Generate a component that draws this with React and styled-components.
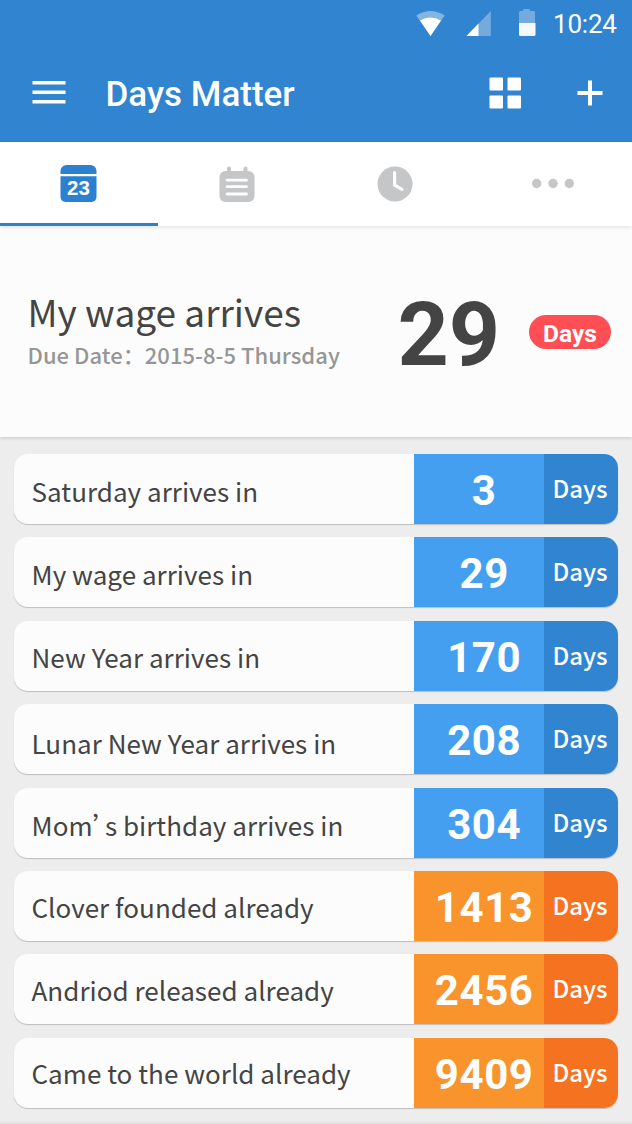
import React from 'react';
import styled, { createGlobalStyle } from 'styled-components';

const GlobalStyle = createGlobalStyle`
    * {
        box-sizing: border-box;
    }
    body {
        margin: 0;
        background: #ededed;
        font-family: 'Noto Sans CJK SC', 'Noto Sans', sans-serif;
        color: #444;
    }
`;

const Screen = styled.div`
    width: 632px;
    height: 1124px;
    overflow: hidden;
    display: flex;
    flex-direction: column;
    background: linear-gradient(#ededed 1120px, #e0e0e0 1124px);
`;

const Header = styled.header`
    height: 142px;
    flex: none;
    background: #3084d0;
    color: #fff;
    font-family: Roboto, sans-serif;
`;

const StatusBar = styled.div`
    height: 48px;
    padding: 0 15px 0 0;
    display: flex;
    justify-content: flex-end;
    svg {
        display: block;
    }
`;

const Clock = styled.span`
    width: 64px;
    margin-left: 17px;
    font-size: 26px;
    line-height: 48px;
    letter-spacing: -0.2px;
    white-space: nowrap;
`;

const AppBar = styled.div`
    height: 92px;
    padding: 0 29px 2px 32px;
    display: flex;
    align-items: center;
`;

const AppTitle = styled.h1`
    flex: 1;
    margin: 0 0 0 39.5px;
    font-size: 35px;
    font-weight: 500;
    line-height: 92px;
    padding-top: 3px;
`;

const IconButton = styled.button`
    padding: 0;
    margin: 0 0 0 ${({ $gap }) => $gap || 0}px;
    border: 0;
    background: none;
    svg {
        display: block;
    }
`;

const Tabs = styled.nav`
    height: 84px;
    flex: none;
    display: grid;
    grid-template-columns: repeat(4, 1fr);
    background: #fff;
    box-shadow: 0 1px 5px rgba(0, 0, 0, 0.12);
    z-index: 1;
`;

const Tab = styled.div`
    display: flex;
    justify-content: center;
    padding-top: 22px;
    border-bottom: 3px solid ${({ $active }) => ($active ? '#2b80d0' : 'transparent')};
    svg {
        display: block;
    }
`;

const Hero = styled.section`
    height: 211px;
    flex: none;
    display: flex;
    padding: 58px 21px 0 27.5px;
    background: #fcfcfc;
    box-shadow: 0 1px 4px rgba(0, 0, 0, 0.16);
`;

const HeroText = styled.div`
    width: 370px;
    white-space: nowrap;
`;

const HeroTitle = styled.h2`
    margin: 0;
    font-size: 37px;
    font-weight: 400;
    line-height: 54px;
`;

const DueDate = styled.p`
    margin: 0;
    font-size: 22px;
    font-weight: 500;
    line-height: 32px;
    letter-spacing: 0.04px;
    color: #969696;
`;

const HeroNumber = styled.div`
    width: 131.5px;
    padding-top: 4px;
    font-family: Roboto, sans-serif;
    font-size: 89.5px;
    font-weight: 700;
    line-height: 94px;
`;

const Badge = styled.span`
    width: 82px;
    height: 34px;
    margin-top: 31px;
    border-radius: 17px;
    background: #ff4f55;
    color: #fff;
    font-family: Roboto, sans-serif;
    font-size: 24.5px;
    font-weight: 700;
    line-height: 37px;
    text-align: center;
`;

const List = styled.ul`
    list-style: none;
    margin: 0;
    padding: 17px 14px 0;
    display: grid;
    grid-auto-rows: 70px;
    row-gap: 13.4px;
`;

const Row = styled.li`
    display: grid;
    grid-template-columns: 400.4px 129.6px 74px;
    border-radius: 14px;
    overflow: hidden;
    background: #fcfcfc;
    box-shadow: 0 1px 1px rgba(0, 0, 0, 0.2);
`;

const RowLabel = styled.div`
    margin-top: ${({ $shift }) => $shift || 0}px;
    padding-left: 17.5px;
    font-size: 26px;
    line-height: 74px;
    letter-spacing: 0.03px;
    white-space: nowrap;
`;

/* the CJK apostrophe is a full em wide, so pull the rest of the word back */
const Apostrophe = styled.span`
    letter-spacing: -19.5px;
`;

const RowNumber = styled.div`
    padding-left: 10px;
    background: ${({ $past }) => ($past ? '#f9932b' : '#459ff1')};
    color: #fff;
    font-family: Roboto, sans-serif;
    font-size: 42px;
    font-weight: 700;
    line-height: 74px;
    letter-spacing: 0.6px;
    text-align: center;
`;

const RowUnit = styled.div`
    padding-right: 2px;
    background: ${({ $past }) => ($past ? '#f57320' : '#3084d0')};
    color: #fff;
    font-size: 24px;
    font-weight: 500;
    line-height: 68px;
    text-align: center;
`;

const StatusIcons = () => (
    <svg width="120" height="48" viewBox="0 0 120 48">
        <path d="M.3 15.5Q14.5 6.500 28.700 15.500L14.500 36Z" fill="#83b5e3" />
        <path d="M4 20.500Q14.500 14.500 25 20.500L14.500 36Z" fill="#fff" />
        <path d="M74.800 11V36H50.500Z" fill="#74aade" />
        <path d="M62.500 23.500V36H50.500Z" fill="#fff" />
        <path d="M103 12.500q0-1.500 1.500-1.500h2.500v-1q0-1 1-1h5q1 0 1 1v1h3.500q1.500 0 1.500 1.500V23h-16Z" fill="#74aade" />
        <path d="M103 23h16.500v11.500q0 1.500-1.500 1.500h-13.500q-1.500 0-1.500-1.500Z" fill="#f3f8fd" />
    </svg>
);

const MenuIcon = () => (
    <svg width="34" height="26" viewBox="0 0 34 26" fill="#fff">
        <rect x=".5" y="1" width="33" height="3.500" />
        <rect x=".5" y="10.500" width="33" height="3.500" />
        <rect x=".5" y="20" width="33" height="3.500" />
    </svg>
);

const GridIcon = () => (
    <svg width="32" height="32" viewBox="0 0 32 32" fill="#fff">
        <rect x=".5" y=".5" width="13.500" height="13" rx="1" />
        <rect x="18.500" y=".5" width="13.500" height="13" rx="1" />
        <rect x=".5" y="18.500" width="13.500" height="13" rx="1" />
        <rect x="18.500" y="18.500" width="13.500" height="13" rx="1" />
    </svg>
);

const PlusIcon = () => (
    <svg width="26" height="26" viewBox="0 0 26 26" fill="#fff">
        <rect x=".5" y="11" width="25" height="4" />
        <rect x="11" y=".5" width="4" height="25" />
    </svg>
);

const CalendarIcon = () => (
    <svg width="38" height="40" viewBox="0 0 38 40">
        <path d="M.5 10V7a6 6 0 0 1 6-6H30.500a6 6 0 0 1 6 6v3Z" fill="#2b80d0" />
        <path d="M.5 12.300H36.500V33a5 5 0 0 1-5 5H5.500a5 5 0 0 1-5-5Z" fill="#2b80d0" />
        <text x="18.500" y="31" fill="#fff" fontSize="20.500" fontWeight="700" textAnchor="middle" fontFamily="Liberation Sans, sans-serif">23</text>
    </svg>
);

const NotesIcon = () => (
    <svg width="38" height="40" viewBox="0 0 38 40">
        <rect x="1.500" y="7" width="35" height="31" rx="6" fill="#c5c6c8" />
        <path d="M11 4.500v5M27.500 4.500v5" stroke="#c5c6c8" strokeWidth="4" strokeLinecap="round" />
        <path d="M9 16.200h19.500M9 22.700h19.500M9 30h19.500" stroke="#fff" strokeWidth="2.800" strokeLinecap="round" />
    </svg>
);

const ClockIcon = () => (
    <svg width="38" height="40" viewBox="0 0 38 40">
        <circle cx="19" cy="20" r="17.500" fill="#c5c6c8" />
        <path d="M18.600 8.500V21.200L26 25.300" fill="none" stroke="#fff" strokeWidth="3.200" strokeLinecap="round" strokeLinejoin="round" />
    </svg>
);

const MoreIcon = () => (
    <svg width="44" height="40" viewBox="0 0 44 40" fill="#c5c6c8">
        <circle cx="5.700" cy="19.500" r="4.700" />
        <circle cx="22" cy="19.500" r="4.700" />
        <circle cx="38.300" cy="19.500" r="4.700" />
    </svg>
);

const events = [
    { label: 'Saturday arrives in', days: 3 },
    { label: 'My wage arrives in', days: 29 },
    { label: 'New Year arrives in', days: 170, shift: -1 },
    { label: 'Lunar New Year arrives in', days: 208, shift: 2 },
    { label: <>Mom<Apostrophe>’</Apostrophe> s birthday arrives in</>, days: 304 },
    { label: 'Clover founded already', days: 1413, past: true, shift: -1 },
    { label: 'Andriod released already', days: 2456, past: true, shift: -1 },
    { label: 'Came to the world already', days: 9409, past: true, shift: -2 },
];

const App = () => {
    return (
        <Screen>
            <GlobalStyle />
            <Header>
                <StatusBar>
                    <StatusIcons />
                    <Clock>10:24</Clock>
                </StatusBar>
                <AppBar>
                    <IconButton aria-label="Menu"><MenuIcon /></IconButton>
                    <AppTitle>Days Matter</AppTitle>
                    <IconButton aria-label="Grid"><GridIcon /></IconButton>
                    <IconButton aria-label="Add" $gap={56}><PlusIcon /></IconButton>
                </AppBar>
            </Header>

            <Tabs>
                <Tab $active><CalendarIcon /></Tab>
                <Tab><NotesIcon /></Tab>
                <Tab><ClockIcon /></Tab>
                <Tab><MoreIcon /></Tab>
            </Tabs>

            <Hero>
                <HeroText>
                    <HeroTitle>My wage arrives</HeroTitle>
                    <DueDate>Due Date：2015-8-5 Thursday</DueDate>
                </HeroText>
                <HeroNumber>29</HeroNumber>
                <Badge>Days</Badge>
            </Hero>

            <List>
                {events.map(({ label, days, past, shift }) => (
                    <Row key={days}>
                        <RowLabel $shift={shift}>{label}</RowLabel>
                        <RowNumber $past={past}>{days}</RowNumber>
                        <RowUnit $past={past}>Days</RowUnit>
                    </Row>
                ))}
            </List>
        </Screen>
    );
};

export default App;
